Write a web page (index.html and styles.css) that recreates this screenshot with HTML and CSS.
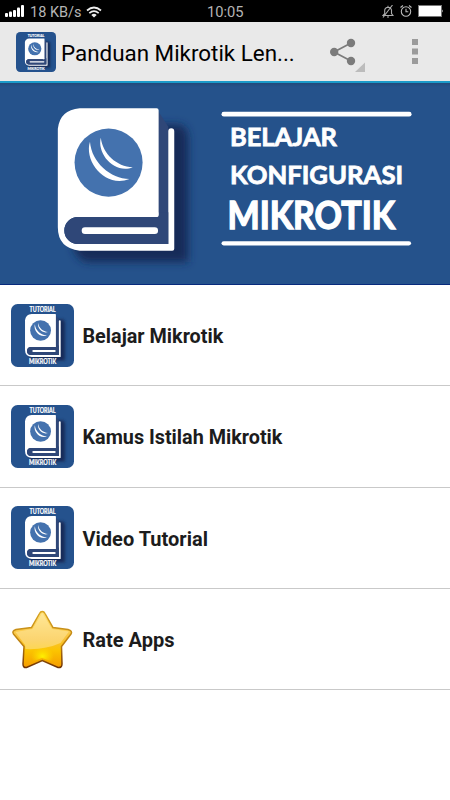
FILE: index.html
```
<!DOCTYPE html>
<html lang="id">
<head>
<meta charset="utf-8">
<title>Panduan Mikrotik Lengkap</title>
<link rel="stylesheet" href="styles.css">
</head>
<body>
<svg class="defs" width="0" height="0" aria-hidden="true">
  <defs>
    <linearGradient id="gold" x1="0" y1="0" x2="0" y2="1">
      <stop offset="0" stop-color="#ffe27a"/><stop offset=".5" stop-color="#f9c136"/><stop offset=".7" stop-color="#fbc400"/><stop offset="1" stop-color="#f59b00"/>
    </linearGradient>
    <linearGradient id="rim" x1="0" y1="0" x2="0" y2="1">
      <stop offset="0" stop-color="#d9a521"/><stop offset=".6" stop-color="#b97c10"/><stop offset="1" stop-color="#6e3204"/>
    </linearGradient>
    <radialGradient id="glow" cx=".5" cy=".7" r=".35">
      <stop offset="0" stop-color="#fff200"/><stop offset="1" stop-color="#ffe000" stop-opacity="0"/>
    </radialGradient>
    <filter id="soft" x="-30%" y="-30%" width="160%" height="160%"><feGaussianBlur stdDeviation="4.5"/></filter>
    <g id="book">
      <path d="M75 42H179Q188 44 188 56V180H88Q74 178 72 160Z" fill="#142c58" filter="url(#soft)"/>
      <path d="M157 27L168 44V163H157Z" fill="#2f4778"/>
      <path d="M79 25.3H156.300Q158.300 25.300 158.300 27.300V132.700Q158.300 134.700 156.300 134.700H77A13.500 13.500 0 0 0 77 161.700H168V48.500A3 3 0 0 1 174 48.500V166.500Q174 168.500 172 168.500H79Q57 166 57 145V46Q59 27 79 25.300Z" fill="#fff"/>
      <path d="M77 134.700H158.300V130H168V161.700H77A13.500 13.500 0 0 1 77 134.700Z" fill="#2f4778"/>
      <path d="M150 130H158.300V132.700Q158.300 134.700 156.300 134.700H150Z" fill="#fff"/>
      <rect x="81" y="145" width="76.700" height="6.700" rx="3.300" fill="#fff"/>
      <circle cx="108" cy="80" r="34.200" fill="#4472ae"/>
      <path d="M89.300 59C83 79 105 106 129 96.500C110 96 91 80 89.300 59Z" fill="#fff"/>
      <path d="M100.200 55C96 71 114 92 132.300 84.700C116 84 102 71 100.200 55Z" fill="#fff"/>
    </g>
    <symbol id="app" viewBox="0 0 62 62">
      <rect width="62" height="62" rx="6.500" fill="#25528d"/>
      <use href="#book" transform="translate(-3.300 2.500) scale(.3 .295)"/>
      <text class="tiny" x="18.200" y="7.700" textLength="25.600" lengthAdjust="spacingAndGlyphs">TUTORIAL</text>
      <text class="tiny" x="17.800" y="59.200" textLength="26.700" lengthAdjust="spacingAndGlyphs">MIKROTIK</text>
    </symbol>
  </defs>
</svg>

<div class="status">
  <svg class="signal" width="20" height="12" viewBox="0 0 20 12" fill="#fff"><rect x="0" y="8" width="3" height="4" rx="1"/><rect x="4" y="6.500" width="3" height="5.500" rx="1"/><rect x="8" y="5" width="3" height="7" rx="1"/><rect x="12" y="2.500" width="3" height="9.500" rx="1"/><rect x="16" y="0" width="3" height="12" rx="1"/></svg>
  <span class="speed">18 KB/s</span>
  <svg class="wifi" width="16" height="12" viewBox="0 0 16 12" fill="none" stroke="#eee" stroke-width="1.700"><path d="M1 4.500Q8-1.500 15 4.500M3.300 7.200Q8 3.200 12.700 7.200"/><path d="M5.300 9Q8 6.500 10.700 9L8 11.500Z" fill="#eee" stroke="none"/></svg>
  <span class="clock">10:05</span>
  <svg class="bell" width="12" height="13" viewBox="0 0 12 13" fill="none" stroke="#aaa" stroke-width="1.100"><path d="M1 10.500H11L9.500 8.500V5Q9 2.500 6 2.200Q3 2.500 2.700 5V8.500ZM5 12H7M6 2V.8M1 12.500L10.500 0"/></svg>
  <svg class="alarm" width="12" height="12" viewBox="0 0 12 12" fill="none" stroke="#bbb" stroke-width="1.100"><circle cx="6" cy="6.500" r="4.700"/><path d="M6 3.700V6.800H8.300M.5 2.500L3 .5M9 .5L11.500 2.500"/></svg>
  <svg class="battery" width="26" height="12" viewBox="0 0 26 12"><rect x=".5" y=".5" width="23" height="11" fill="#fff" stroke="#777"/><path d="M24 4.500Q26 6 24 7.500Z" fill="#999"/></svg>
</div>

<header class="bar">
  <svg class="bar-icon" width="40" height="40"><use href="#app"/></svg>
  <h1 class="title">Panduan Mikrotik Len...</h1>
  <svg class="share" width="36" height="36" viewBox="0 0 36 36"><path d="M21 5L4 14L21 23" fill="none" stroke="#7b7b7b" stroke-width="1.700"/><g fill="#7b7b7b"><circle cx="21" cy="5" r="4.200"/><circle cx="4.200" cy="14" r="4.200"/><circle cx="21" cy="23" r="4.200"/></g><path d="M35 24.500V34H25Z" fill="#bcbcbc"/></svg>
  <svg class="more" width="6" height="26" viewBox="0 0 6 26" fill="#9b9b9b"><path d="M0 0H6V6H0ZM0 9.500H6V15.500H0ZM0 19H6V25H0Z"/></svg>
</header>

<svg class="banner" width="450" height="202" viewBox="0 0 450 202">
  <use href="#book"/>
  <g class="banner-text">
    <rect x="221.500" y="29" width="191" height="4.600" rx="2.300"/>
    <text x="230" y="63.500" font-size="25.500" textLength="107.500" lengthAdjust="spacingAndGlyphs">BELAJAR</text>
    <text x="230" y="101.800" font-size="25.500" textLength="174" lengthAdjust="spacingAndGlyphs">KONFIGURASI</text>
    <text class="big" x="227.500" y="146.500" font-size="37.500" textLength="168.500" lengthAdjust="spacingAndGlyphs">MIKROTIK</text>
    <rect x="221.500" y="159" width="190.500" height="4.300" rx="2.150"/>
  </g>
</svg>

<main class="list">
  <div class="row"><svg class="row-icon" width="63" height="63"><use href="#app"/></svg><span>Belajar Mikrotik</span></div>
  <div class="row"><svg class="row-icon" width="63" height="63"><use href="#app"/></svg><span>Kamus Istilah Mikrotik</span></div>
  <div class="row"><svg class="row-icon" width="63" height="63"><use href="#app"/></svg><span class="wide">Video Tutorial</span></div>
  <div class="row">
    <svg class="row-icon" width="63" height="63" viewBox="0 0 63 63">
      <path d="M31.300 3.500Q33 3.500 34 5.500L42 19.500L57 21.500Q62 23 60 26L50.500 38.500L51 56Q51 60 47 59.500L31.300 52.500L15.500 59.500Q12 60 12 56L13 38.500L2.500 26Q.5 23 5 21.500L20.500 19.500L28.500 5.500Q29.500 3.500 31.300 3.500Z" fill="url(#gold)" stroke="url(#rim)" stroke-width="1.500"/>
      <path d="M31 30L46 38L48 56L31 50L15 56L17 38Z" fill="url(#glow)"/>
      <path d="M31.300 5L41 21L58 23.500L49.500 35Q34 42 14.500 41L14 37L4.500 24L21.500 21Z" fill="#fff2c8" fill-opacity=".4"/>
    </svg><span class="wide">Rate Apps</span>
  </div>
</main>
</body>
</html>
```
FILE: styles.css
```
* { box-sizing: border-box; }
body { margin: 0; width: 450px; height: 800px; overflow: hidden; background: #fff; font-family: Roboto, "Liberation Sans", sans-serif; }
svg { display: block; flex: none; }
.defs { position: absolute; }
.status { display: flex; align-items: center; height: 22px; padding: 1px 6px 0 5px; background: #000; color: #b5b5b5; font-size: 14.5px; line-height: 21px; white-space: nowrap; }
.signal { margin-top: -2px; }
.speed { width: 52px; margin-left: 5px; padding-top: 1px; }
.wifi { margin-left: 4px; }
.clock { width: 38px; margin-left: 105px; padding-top: 1px; font-size: 14.7px; }
.bell { margin-left: 137px; }
.alarm { margin: -2px 0 0 6px; }
.battery { margin: -1px 0 0 auto; }
.bar { display: flex; align-items: center; height: 61px; padding-left: 15.5px; background: #e9e9e9; border-bottom: 2px solid #1c9bca; }
.title { width: 236px; margin: 3px 0 0 5.500px; font-size: 22.4px; font-weight: 400; line-height: 28px; color: #000; white-space: nowrap; }
.share { margin: 8px 0 0 33px; }
.more { margin-left: 46px; }
.banner { background: linear-gradient(#23497b, #25528b 4px); border-bottom: 1px solid #082a7c; }
.banner-text { fill: #fff; font-family: Lato, sans-serif; font-weight: 700; stroke: #fff; stroke-width: .8px; }
.banner-text rect { stroke: none; }
.big { stroke-width: 1.4px; }
.tiny { fill: #fff; font-family: Lato, sans-serif; font-size: 6.5px; font-weight: 700; stroke: #fff; stroke-width: .2px; }
.row { display: flex; align-items: center; height: 101.3px; padding-left: 11px; border-bottom: 1px solid #c9c9c9; font-size: 19.8px; font-weight: 700; color: #1c1c1c; }
.row span { margin: 2px 0 0 8.500px; }
.row .wide { font-size: 20px; }
```
